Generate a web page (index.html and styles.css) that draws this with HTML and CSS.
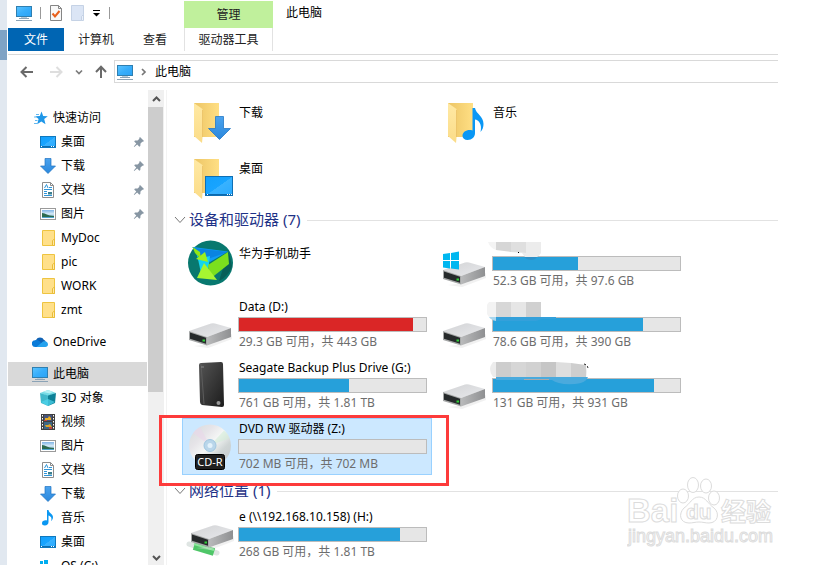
FILE: index.html
```html
<!DOCTYPE html>
<html lang="zh-CN">
<head>
<meta charset="utf-8">
<title>此电脑</title>
<link rel="stylesheet" href="styles.css">
</head>
<body>
<svg class="defs" aria-hidden="true">
  <defs>
    <linearGradient id="screen" x1="0" y1="0" x2="1" y2="1"><stop offset="0" stop-color="#5cc4ff"/><stop offset=".5" stop-color="#37aefb"/><stop offset="1" stop-color="#2aa2f5"/></linearGradient>
    <linearGradient id="desk" x1="0" y1="0" x2="1" y2="1"><stop offset="0" stop-color="#12a0fc"/><stop offset=".5" stop-color="#18a4ff"/><stop offset=".51" stop-color="#38b2ff"/><stop offset="1" stop-color="#2aaaff"/></linearGradient>
    <linearGradient id="arrow" x1="0" y1="0" x2="0" y2="1"><stop offset="0" stop-color="#4ba3ee"/><stop offset="1" stop-color="#2a87dc"/></linearGradient>
    <linearGradient id="fback" x1="0" y1="0" x2="1" y2="0"><stop offset="0" stop-color="#ecc565"/><stop offset="1" stop-color="#ffdf84"/></linearGradient>
    <linearGradient id="ffront" x1="0" y1="0" x2="0" y2="1"><stop offset="0" stop-color="#ffe9a4"/><stop offset="1" stop-color="#fbdc88"/></linearGradient>
    <linearGradient id="metal" x1="0" y1="0" x2="1" y2="1"><stop offset="0" stop-color="#d2d3d5"/><stop offset="1" stop-color="#e8e9ec"/></linearGradient>
    <linearGradient id="side" x1="0" y1="0" x2="1" y2="0"><stop offset="0" stop-color="#b9babb"/><stop offset="1" stop-color="#8f9092"/></linearGradient>
    <linearGradient id="black" x1="0" y1="0" x2="1" y2="1"><stop offset="0" stop-color="#555"/><stop offset="1" stop-color="#1c1c1c"/></linearGradient>
    <linearGradient id="disc" x1="0" y1="0" x2="1" y2="1"><stop offset="0" stop-color="#d5dbdc"/><stop offset=".3" stop-color="#e6e4e8"/><stop offset=".5" stop-color="#f5f7f6"/><stop offset=".7" stop-color="#cfd5d5"/><stop offset="1" stop-color="#c0c8ca"/></linearGradient>
    <linearGradient id="photo" x1="0" y1="0" x2="0" y2="1"><stop offset="0" stop-color="#7fb4e6"/><stop offset=".5" stop-color="#d8ecf8"/><stop offset="1" stop-color="#3f87a8"/></linearGradient>

    <symbol id="i-pc" viewBox="0 0 16 16"><rect x=".5" y="1.500" width="15" height="10" fill="url(#screen)" stroke="#2f7fb0"/><rect x="5" y="12" width="6" height="1" fill="#b9cbd8"/><rect x="3" y="13" width="10" height="1" fill="#8ba3b6"/><rect x="0" y="15" width="16" height="1" fill="#8ba3b6"/></symbol>
    <symbol id="i-star" viewBox="0 0 16 16"><path d="M9.500 1.500 11.200 6l4.600.3-3.600 2.800 1.300 5.200-4.200-2.900-4.200 2.800L6.600 9 3.300 6.200l4.500-.2z" fill="#1f97e8"/><path d="M4 4.500h3M2 7h3M3 10.500h2.500M2 13.500h3" stroke="#63b8f0" stroke-width="1"/></symbol>
    <symbol id="i-desktop" viewBox="0 0 16 16"><rect x=".5" y="2.500" width="15" height="11" fill="url(#desk)" stroke="#0f78bd"/><path d="M1 12.500h14" stroke="#0c6db0"/><path d="M1 12.500h1M11 12.500h1M13 12.500h1" stroke="#fff"/></symbol>
    <symbol id="i-down" viewBox="0 0 16 16"><path d="M5 .5h6V8h4.500L8 15.500.5 8H5z" fill="url(#arrow)" stroke="#1f73c2" stroke-width=".7"/></symbol>
    <symbol id="i-doc" viewBox="0 0 16 16"><path d="M2.500.5h8L13.500 3.500v12h-11z" fill="#fff" stroke="#8d8d8d"/><path d="M10.500.5v3h3" fill="none" stroke="#8d8d8d"/><path d="m4.500 6 2-3.500L8 6M4 7.500h8M9 5.500h3M4 9.500h3M4 11.500h3M4 13.500h8" fill="none" stroke="#2f95d8"/><path d="M8 10h4v2.500H8z" fill="#3b7f8f"/></symbol>
    <symbol id="i-pic" viewBox="0 0 16 16"><rect x=".5" y="2.500" width="15" height="11" fill="#fff" stroke="#9a9a9a"/><rect x="2" y="4" width="12" height="8" fill="url(#photo)"/><path d="M2 7c4 0 5 3 12 3v1.500H2z" fill="#2c6b50"/><path d="M2 11h12v1H2z" fill="#4fa3cf"/></symbol>
    <symbol id="i-folder" viewBox="0 0 16 16"><path d="M2.500.5h12v15h-12z" fill="#ffe08a" stroke="#eec440"/><path d="M12.500 15.500v-5l2-1.500v6.500z" fill="#ffe9a8" stroke="#e9bc36"/></symbol>
    <symbol id="i-cloud" viewBox="0 0 16 16"><path d="M4 6a4.500 4.500 0 0 1 8 0c1 .3 1.500 1 1.800 1.500L6 11z" fill="#0f62b5"/><path d="M3.500 13A3.400 3.400 0 0 1 3 6.200c2-.6 3.500 0 5 1.300l3 5.500z" fill="#0a7bd8"/><path d="M4.500 13 11 7.500c3-1 5 .8 5 3 0 1.500-1.200 2.500-2.600 2.500z" fill="#25a2ee"/></symbol>
    <symbol id="i-cube" viewBox="0 0 16 16"><path d="m0 3 8-3 8 3-8 3z" fill="#74dce6"/><path d="m0 3 8 2.500V16l-7-3z" fill="#3fb9cb"/><path d="m8 5.500 8-2.500-1 10-7 3z" fill="#0d8197"/><path d="m3 2 5-2 5 2-3 1.500z" fill="#b5f1f4"/><path d="m1 12 7-3 7 3-7 4z" fill="#50d5ee" opacity=".7"/></symbol>
    <symbol id="i-film" viewBox="0 0 16 16"><path d="M1 0h14v16H1z" fill="#404040"/><path d="M2.500 1v15M13.500 1v15" stroke="#fff" stroke-dasharray="1.500 1.500"/><path d="M4 1h8v6H4z" fill="#46547b"/><path d="M4 8h8v7H4z" fill="#3c6787"/><path d="M5 4h3l1-2 2 2v2H5z" fill="#e9af24"/><path d="M5 11h3l2-1 2 3H6z" fill="#dba429"/><path d="M4 6h3v1H4zM9 13h3v2H9z" fill="#c04542"/></symbol>
    <symbol id="i-note" viewBox="0 0 16 16"><path d="M7 0h1.500c.3 3 4.500 4 4.500 7 0 2-1 3.500-2 4 1.500-3-.5-5-2.500-5.500V12c0 2-1.500 3.500-3.700 3.500C3 15.500 2 14.500 2 13.200 2 11 4.500 10 7 10.500z" fill="#0a97f2"/></symbol>
    <symbol id="i-win" viewBox="0 0 16 16"><path d="M0 3h3v3H0zM4 2h4v4H4zM0 7h3v3H0zM4 7h4v4H4z" fill="#00adef"/><path d="M1 11 9 9l7 3v3H1z" fill="#c9cacc"/></symbol>
    <symbol id="i-pin" viewBox="0 0 12 12"><path d="m7 1 4 4-1 .8-.7-.1L7.500 7.500 7.300 10l-1 .8-2.100-2.200L1.200 11l-.4-.4 2.500-3L1.200 5.600l.8-1 2.600-.2L6.400 2.700l-.2-.8z" fill="#8796a3"/></symbol>

    <symbol id="i-bigfolder" viewBox="0 0 40 42"><path d="M1 1h25v34H1z" fill="url(#fback)"/><path d="m1 1 8.500 6v29L9 41 1 34z" fill="url(#ffront)"/><path d="M9.500 35V8" stroke="#e5b95a" stroke-width=".6"/></symbol>
    <symbol id="i-drive" viewBox="0 0 48 30"><path d="M6 26 20 28l24-9v-5l-20 10z" fill="#ddd" opacity=".4"/><path d="M1 11 23 3.500q2-.7 4 0L43 8 19 17z" fill="url(#metal)"/><path d="m19 17 24-9v9L19 25.500z" fill="url(#side)"/><path d="m1 11 18 6v8.500L1 20z" fill="#a6a8a8"/><path d="m2 12.500 16 5.300v6L2 18.800z" fill="#262a2b"/><path d="M14.500 19.500h2.500v2h-2.500z" fill="#30d038"/></symbol>
  </defs>
</svg>

<div class="desktop">
  <div class="backdrop"></div>
  <div class="window">
    <header class="title">
      <div class="quick">
        <svg class="icon"><use href="#i-pc"/></svg>
        <i class="sep"></i>
        <button class="tool" aria-label="属性"><svg width="14" height="16" viewBox="0 0 14 16"><path d="M1.500.5h8l3 3v12h-11z" fill="#f8f8f8" stroke="#858585"/><path d="M9.500.5v3h3" fill="none" stroke="#858585"/><path d="m3.500 8.500 2.500 3L10.500 6" fill="none" stroke="#e8601c" stroke-width="2"/></svg></button>
        <button class="tool" aria-label="新建文件夹"><svg width="14" height="16" viewBox="0 0 14 16"><path d="M.5.500h12v9l-2 2v4H.5z" fill="#dbe5f5" stroke="#c5d2e5"/><path d="M10.500 15.500v-4l2-2v6z" fill="#eaf0fa" stroke="#c5d2e5"/></svg></button>
        <button class="tool" aria-label="自定义快速访问工具栏"><svg width="8" height="8" viewBox="0 0 8 8"><path d="M0 1.500h7" stroke="#000"/><path d="M0 4h7L3.500 7.500z"/></svg></button>
        <i class="sep"></i>
      </div>
      <div class="context">管理</div>
      <h1>此电脑</h1>
    </header>
    <nav class="tabs">
      <div class="tabset">
        <button class="tab file">文件</button>
        <button class="tab">计算机</button>
        <button class="tab">查看</button>
      </div>
      <button class="tab tools">驱动器工具</button>
    </nav>
    <div class="address">
      <div class="history">
        <button class="tool" aria-label="后退"><svg width="14" height="12" viewBox="0 0 14 12"><path d="M13 6H2M6.500 1 1.500 6l5 5" fill="none" stroke="#6a6a6a" stroke-width="2"/></svg></button>
        <button class="tool" aria-label="前进"><svg width="14" height="12" viewBox="0 0 14 12"><path d="M1 6h11M7.500 1l5 5-5 5" fill="none" stroke="#dedede" stroke-width="2"/></svg></button>
        <button class="tool" aria-label="最近位置"><svg width="8" height="6" viewBox="0 0 8 6"><path d="m1 1.500 3 3 3-3" fill="none" stroke="#7c7c7c" stroke-width="1.700"/></svg></button>
        <button class="tool" aria-label="上移"><svg width="14" height="14" viewBox="0 0 14 14"><path d="M7 13V2M2 7l5-5.300L12 7" fill="none" stroke="#6a6a6a" stroke-width="2"/></svg></button>
      </div>
      <div class="path">
        <svg class="icon"><use href="#i-pc"/></svg>
        <svg width="6" height="8" viewBox="0 0 6 8"><path d="m1 1 3 3-3 3" fill="none" stroke="#777" stroke-width="1.700"/></svg>
        <a href="#">此电脑</a>
      </div>
    </div>
    <div class="main">
      <aside class="tree">
        <a class="node root" href="#"><svg class="icon"><use href="#i-star"/></svg>快速访问</a>
        <a class="node" href="#"><svg class="icon"><use href="#i-desktop"/></svg>桌面<svg class="pin"><use href="#i-pin"/></svg></a>
        <a class="node" href="#"><svg class="icon"><use href="#i-down"/></svg>下载<svg class="pin"><use href="#i-pin"/></svg></a>
        <a class="node" href="#"><svg class="icon"><use href="#i-doc"/></svg>文档<svg class="pin"><use href="#i-pin"/></svg></a>
        <a class="node" href="#"><svg class="icon"><use href="#i-pic"/></svg>图片<svg class="pin"><use href="#i-pin"/></svg></a>
        <a class="node" href="#"><svg class="icon"><use href="#i-folder"/></svg>MyDoc</a>
        <a class="node" href="#"><svg class="icon"><use href="#i-folder"/></svg>pic</a>
        <a class="node" href="#"><svg class="icon"><use href="#i-folder"/></svg>WORK</a>
        <a class="node" href="#"><svg class="icon"><use href="#i-folder"/></svg>zmt</a>
        <a class="node root spaced" href="#"><svg class="icon"><use href="#i-cloud"/></svg>OneDrive</a>
        <a class="node root spaced current" href="#"><svg class="icon"><use href="#i-pc"/></svg>此电脑</a>
        <a class="node" href="#"><svg class="icon"><use href="#i-cube"/></svg>3D 对象</a>
        <a class="node" href="#"><svg class="icon"><use href="#i-film"/></svg>视频</a>
        <a class="node" href="#"><svg class="icon"><use href="#i-pic"/></svg>图片</a>
        <a class="node" href="#"><svg class="icon"><use href="#i-doc"/></svg>文档</a>
        <a class="node" href="#"><svg class="icon"><use href="#i-down"/></svg>下载</a>
        <a class="node" href="#"><svg class="icon"><use href="#i-note"/></svg>音乐</a>
        <a class="node" href="#"><svg class="icon"><use href="#i-desktop"/></svg>桌面</a>
        <a class="node" href="#"><svg class="icon"><use href="#i-win"/></svg>OS (C:)</a>
      </aside>
      <div class="scroll">
        <svg width="9" height="17" viewBox="0 0 9 17"><path d="m1 11 3.500-3.500L8 11" fill="none" stroke="#555" stroke-width="2"/></svg>
        <div class="thumb"></div>
        <svg width="9" height="17" viewBox="0 0 9 17"><path d="m1 8 3.500 3.500L8 8" fill="none" stroke="#555" stroke-width="2"/></svg>
      </div>
      <main class="content">
        <section class="tiles folders">
          <div class="tile">
            <svg class="art" viewBox="-1 0 56 52"><use href="#i-bigfolder" x="10" width="40" height="42"/><path d="M32.500 14.500h8v12h7L36.500 37.500 25.500 26.500h7z" fill="url(#arrow)" stroke="#2478c6" stroke-width=".8"/></svg>
            <div class="info"><div class="name">下载</div></div>
          </div>
          <div class="tile">
            <svg class="art" viewBox="-1 0 56 52"><use href="#i-bigfolder" x="10" width="40" height="42"/><path d="M35.500 6H38c1 6 8.500 8 8.500 16 0 3-1 6-3 8 2-8-2-12-5.500-12.500V31c0 4-3 7-7.500 7-3 0-5-2-5-4.300 0-4 5-6.700 10-5.200z" fill="#0a97f5"/></svg>
            <div class="info"><div class="name">音乐</div></div>
          </div>
          <div class="tile">
            <svg class="art" viewBox="-1 0 56 52"><use href="#i-bigfolder" x="10" width="40" height="42"/><rect x="22.500" y="18.500" width="27" height="19" fill="url(#desk)" stroke="#0f6fb4"/><path d="M23 36.500h26" stroke="#0a69ae"/><path d="M24 36.500h1M44 36.500h1M46 36.500h1M48 36.500h1" stroke="#fff"/></svg>
            <div class="info"><div class="name">桌面</div></div>
          </div>
        </section>

        <h2><svg width="12" height="8" viewBox="0 0 12 8"><path d="m1 1 5 5.500L11 1" fill="none" stroke="#777"/></svg><span>设备和驱动器 (7)</span></h2>
        <section class="tiles">
          <div class="tile app">
            <svg class="art" viewBox="-1 0 56 57"><circle cx="27.500" cy="28" r="22.500" fill="#08786f"/><path d="m9 12 36 6-9 28c6-3 11-8 13-15l-3-13z" fill="#075f58"/><path d="m10 12 35 4.500L27 27 9 12z" fill="#0f9bf5"/><path d="m45 17-26 9-8-13z" fill="#087ad8" opacity=".7"/><path d="m13 18 8 12 2 7-6-8z" fill="#10d8f0"/><path d="m15 24 12-3-2 17-6 5z" fill="#13d5ef"/><path d="M9.500 12 17 17l1 7-6-6z" fill="#91e615"/><path d="m22 17 3 10-12-3z" fill="#9af01f"/><path d="m25 30 20-13 1 12-19 15z" fill="#7be01e"/><path d="m21 28 13 17-20-2z" fill="#a6f531"/></svg>
            <div class="info"><div class="name">华为手机助手</div></div>
          </div>
          <div class="tile">
            <svg class="art" viewBox="0 0 56 57"><use href="#i-drive" x="6" y="24" width="48" height="30"/><path d="m7 19 7-1v7H7zM15 18l8-1.500V25h-8zM7 26h7v7.500l-7-1zM15 26h8v8.500L15 33.500z" fill="#00b7f0"/></svg>
            <div class="info"><div class="name"></div><div class="bar"><div class="fill" style="width:45.500%"></div></div><div class="free">52.3 GB 可用，共 97.6 GB</div></div>
            <svg class="mask" width="120" height="32" viewBox="0 0 120 32"><path d="M1 6h8v8q-6-2-8-8z" fill="#f4f4f4"/><path d="M9 6h15v10L9 14z" fill="#d6d6d6"/><path d="M24 6h15v11l-15-1z" fill="#dfdfdf"/><path d="M39 6h15v11q-2 3-4 4H38l-3-4h4z" fill="#ececec"/><path d="M37 21h13q-2 3-6 3t-7-3z" fill="#2e90c8"/><path d="M31 16h1v1h-1z"/></svg>
          </div>
          <div class="tile">
            <svg class="art" viewBox="0 0 56 57"><use href="#i-drive" x="6" y="24" width="48" height="30"/></svg>
            <div class="info"><div class="name">Data (D:)</div><div class="bar"><div class="fill full" style="width:93%"></div></div><div class="free">29.3 GB 可用，共 443 GB</div></div>
          </div>
          <div class="tile">
            <svg class="art" viewBox="0 0 56 57"><use href="#i-drive" x="6" y="24" width="48" height="30"/></svg>
            <div class="info"><div class="name"></div><div class="bar"><div class="fill" style="width:80.200%"></div></div><div class="free">78.6 GB 可用，共 390 GB</div></div>
            <svg class="mask" width="120" height="32" viewBox="0 0 120 32"><path d="M9 5v15H2q-6-8 0-15z" fill="#f3f3f3"/><path d="M9 5h15v15H9z" fill="#d7d7d7"/><path d="M24 5h15v15H24z" fill="#e6e6e6"/><path d="M39 5h15v15H39z" fill="#d0d0d0"/><path d="M2 20h7v4q-5-1-7-4z" fill="#a9d6ee"/><path d="M9 20h60v2H55l-6 2H9z" fill="#34a0da"/></svg>
          </div>
          <div class="tile">
            <svg class="art" viewBox="0 0 56 57"><path d="M17 8q0-2 2-2l20-1q2 0 2 2l1 41q0 2-2 2l-20-2q-2-1-2-3z" fill="url(#black)"/><path d="m19 7 3 40" stroke="#5c5c5c"/><circle cx="36.500" cy="46" r="2" fill="#999"/><path d="M19 10h3" stroke="#888"/></svg>
            <div class="info"><div class="name">Seagate Backup Plus Drive (G:)</div><div class="bar"><div class="fill" style="width:59%"></div></div><div class="free">761 GB 可用，共 1.81 TB</div></div>
          </div>
          <div class="tile">
            <svg class="art" viewBox="0 0 56 57"><use href="#i-drive" x="6" y="24" width="48" height="30"/></svg>
            <div class="info"><div class="name"></div><div class="bar"><div class="fill" style="width:86%"></div></div><div class="free">131 GB 可用，共 931 GB</div></div>
            <svg class="mask" width="120" height="32" viewBox="0 0 120 32"><path d="M9 4v15H6q-6-8 0-15z" fill="#ececec"/><path d="M9 4h15v15H9z" fill="#cdcdcd"/><path d="M24 4h15v15H24z" fill="#d6d6d6"/><path d="M39 4h15v15H39z" fill="#d1d1d1"/><path d="M54 4h15v15H54z" fill="#c6c6c6"/><path d="M69 4l15 1v14H69z" fill="#dedede"/><path d="M84 5l15 2v12H84z" fill="#cecece"/><path d="M99 9q2 5 0 10z" fill="#efefef"/><path d="M9 19h92q-2 6-13 7-17 1-23-4H9z" fill="#4aaadd"/><path d="M37 21.500h25" stroke="#aaa"/><path d="M97 6q4 1 4 5" fill="none" stroke="#222" stroke-dasharray="2 2"/></svg>
          </div>
          <div class="tile selected">
            <svg class="art" viewBox="-1 0 56 57"><circle cx="27" cy="27.500" r="21" fill="url(#disc)"/><path d="M27 27.500 10 15q3-4 7-6z" fill="#ead7ea" opacity=".6"/><path d="m27 27.500 14-15q4 3 5 8z" fill="#d3ecd8" opacity=".6"/><circle cx="27" cy="27.500" r="6" fill="#b9d6ea" stroke="#9fc6e0"/><circle cx="27" cy="27.500" r="2.500" fill="#e3f2fb"/><rect x="12.500" y="36.500" width="29" height="15" rx="2" fill="#202020" stroke="#000"/><text x="27" y="48" class="badge">CD-R</text></svg>
            <div class="info"><div class="name">DVD RW 驱动器 (Z:)</div><div class="bar"></div><div class="free">702 MB 可用，共 702 MB</div></div>
            <div class="marker"></div>
          </div>
        </section>

        <h2 class="after"><svg width="12" height="8" viewBox="0 0 12 8"><path d="m1 1 5 5.500L11 1" fill="none" stroke="#777"/></svg><span>网络位置 (1)</span></h2>
        <section class="tiles">
          <div class="tile">
            <svg class="art" viewBox="0 0 56 57"><path d="m7 38 28 9" stroke="#dfe5e3" stroke-width="5" stroke-linecap="round"/><path d="m12 40 20 6" stroke="#4fc668" stroke-width="8"/><path d="m12 38 20 6" stroke="#8be89c" stroke-width="2"/><use href="#i-drive" x="8" y="16" width="48" height="30"/></svg>
            <div class="info"><div class="name">e (\\192.168.10.158) (H:)</div><div class="bar"><div class="fill" style="width:86%"></div></div><div class="free">268 GB 可用，共 1.81 TB</div></div>
          </div>
        </section>
      </main>
    </div>
  </div>
  <svg class="watermark" width="150" height="76" viewBox="0 0 150 76">
    <g class="outline">
      <text x="0" y="49" class="wm-brand">Bai</text>
      <ellipse cx="56" cy="23" rx="5.500" ry="7"/><ellipse cx="66" cy="12" rx="5.500" ry="7.500"/><ellipse cx="79" cy="13" rx="5.500" ry="7"/><ellipse cx="87" cy="25" rx="5.500" ry="7"/>
      <path d="M72 24c7 0 9 7 15 11 6 5 4 15-5 15-4 0-6-1-10-1s-6 1-10 1c-9 0-11-9-5-15 6-4 8-11 15-11z"/>
      <text x="59" y="46" class="wm-du">du</text>
      <text x="94" y="48" class="wm-cjk">经验</text>
      <text x="1" y="69" class="wm-url">jingyan.baidu.com</text>
    </g>
  </svg>
</div>
</body>
</html>
```
FILE: styles.css
```css
* { box-sizing: border-box; }
body {
  margin: 0;
  background: #fff;
  color: #000;
  font: 12px/18px "Noto Sans", "Noto Sans CJK SC", sans-serif;
}
a { color: inherit; text-decoration: none; }
svg { display: block; flex: none; }
button { border: 0; padding: 0; margin: 0; background: none; font: inherit; color: inherit; }
h1, h2 { margin: 0; font-weight: 400; }
.defs { position: absolute; width: 0; height: 0; }
.icon { width: 16px; height: 16px; }
.tool { display: flex; }

.desktop { position: relative; display: flex; height: 100vh; overflow: hidden; padding-right: 40px; }
.backdrop {
  flex: none;
  width: 7px;
  margin-right: 1px;
  background: linear-gradient(#e1e8f0 30px, #7fa3c5 30px, #7fa3c5 60px, #e1e8f0 60px);
}
.window { flex: 1; min-width: 0; display: flex; flex-direction: column; }

.title, .tabs { display: grid; grid-template-columns: 176px 89px 1fr; flex: none; }
.title { height: 28px; padding-top: 1px; }
.quick { display: flex; align-items: center; gap: 8px; padding: 0 8px; height: 24px; }
.sep { width: 1px; height: 12px; background: #999; }
.context { background: #c0f09c; color: #222; text-align: center; line-height: 27px; }
.title h1 { font-size: 12px; line-height: 24px; padding-left: 13px; }

.tabs { height: 27px; padding-bottom: 4px; border-bottom: 1px solid #d9d9d9; color: #222; }
.tabset { display: flex; }
.tab { padding: 0 14px; line-height: 23px; }
.tab + .tab { margin-right: 1px; }
.file { padding: 0 16px; background: #0065b3; color: #fff; }
.tools { padding: 0; border: solid #e2e2e2; border-width: 0 1px; }

.address { display: flex; flex: none; padding: 5px 0 7px; }
.history { display: flex; align-items: center; justify-content: space-between; width: 106px; padding: 0 6px 0 12px; }
.history .tool:first-child { margin-right: 4px; }
.path { flex: 1; display: flex; align-items: center; gap: 8px; height: 23px; padding-left: 2px; border: 1px solid #d9d9d9; border-right: 0; }

.main { flex: 1; min-height: 0; display: flex; }
.tree { flex: none; width: 140px; padding-top: 16px; overflow: hidden; }
.node { display: flex; align-items: center; gap: 5px; height: 24px; padding-left: 32px; margin-right: 1px; white-space: nowrap; }
.root { padding-left: 24px; }
.spaced { margin-top: 8px; }
.current { background: #d9d9d9; }
.pin { width: 12px; height: 12px; margin-left: auto; margin-right: 2px; }
.scroll { flex: none; width: 16px; display: flex; flex-direction: column; align-items: center; background: #f0f0f0; }
.thumb { width: 100%; height: 285px; margin-bottom: auto; background: #cdcdcd; border-right: 1px solid #f0f0f0; }

.content { flex: 1; min-width: 0; margin-left: 2px; padding-top: 12px; border-left: 1px solid #f3f3f3; }
.tiles { display: grid; grid-template-columns: repeat(auto-fill, 250px); gap: 4px; padding-left: 15px; }
.tile { position: relative; display: flex; height: 57px; padding: 1px 4px 1px 0; border: 1px solid transparent; }
.folders .tile { height: 52px; }
.art { width: 56px; height: 57px; margin: -2px 0 0 -1px; }
.folders .art { height: 52px; }
.info { flex: 1; min-width: 0; }
.app .info { padding-top: 8px; }
.name { height: 18px; padding-left: 1px; white-space: nowrap; }
.bar { height: 15px; margin: 1px 0; background: #e6e6e6; border: 1px solid #bcbcbc; }
.fill { height: 100%; background: #26a0da; }
.full { background: #da2626; }
.free { padding-left: 1px; color: #6d6d6d; white-space: nowrap; }
.selected { background: #cce8ff; border-color: #99d1ff; }
.badge { font: 11px "Noto Sans", sans-serif; fill: #fff; text-anchor: middle; }
.mask { position: absolute; left: 50px; top: 0; }
.marker { position: absolute; left: -24px; top: -4px; width: 290px; height: 71px; border: 3px solid #fd3b3b; z-index: 1; }

h2 { display: flex; align-items: center; gap: 3px; height: 20px; margin: 0 0 5px; padding-left: 7px; font-size: 15px; line-height: 20px; color: #1e3287; }
h2 span { padding-bottom: 2px; }
h2::after { content: ""; flex: 1; height: 1px; margin-left: 4px; background: #e2e2e2; }
.after { margin-top: 6px; }

.watermark { position: absolute; right: 41px; bottom: 16px; }
.outline { fill: #fff; stroke: #dcdcdc; stroke-width: 1; }
.wm-brand { font: bold 33px "Liberation Sans", sans-serif; }
.wm-du { font: bold 21px "Liberation Sans", sans-serif; }
.wm-cjk { font: bold 25px "Noto Sans CJK SC", sans-serif; }
.wm-url { font: 18px "Liberation Sans", sans-serif; }
```
